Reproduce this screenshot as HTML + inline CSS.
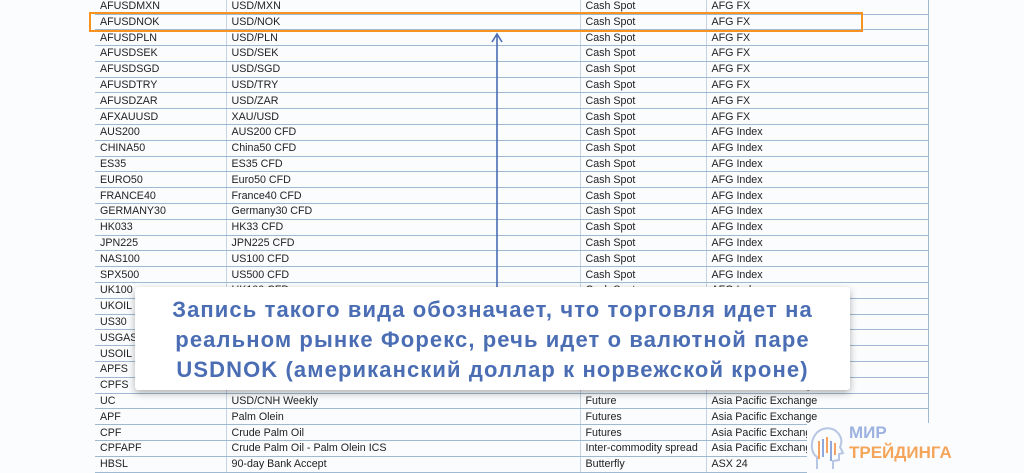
<!DOCTYPE html>
<html><head><meta charset="utf-8"><style>
html,body{margin:0;padding:0;width:1024px;height:473px;overflow:hidden;background:#fafcfe;position:relative;font-family:"Liberation Sans",Arial,sans-serif}
table{position:absolute;left:95px;top:-1.3px;border-collapse:collapse;table-layout:fixed;width:833px}
td{height:14.8px;padding:0 0 0 5px;border-bottom:1px solid #9fb9d3;border-left:1px solid #c5d3e2;font-size:10.7px;color:#222;line-height:14px;white-space:nowrap;overflow:hidden;vertical-align:middle}
td:first-child{border-left:none}
td:last-child{border-right:1px solid #9fb9d3}
.box{position:absolute;left:135px;top:287px;width:715px;height:103px;background:#fff;border-radius:3px;box-shadow:0 3px 8px rgba(0,0,0,0.3)}
.box p{margin:0;position:absolute;left:0;right:0;top:8px;text-align:center;color:#4a6db4;font-weight:bold;font-size:22px;letter-spacing:1.1px;line-height:30px}
.orange{position:absolute;left:89px;top:12px;width:770px;height:16px;border:2px solid #f7931e}
.logo{position:absolute;left:807px;top:423px;width:217px;height:50px;background:#fafcfe}
</style></head><body>
<table>
<colgroup><col style="width:131px"><col style="width:354px"><col style="width:126px"><col style="width:222px"></colgroup>
<tr><td>AFUSDMXN</td><td>USD/MXN</td><td>Cash Spot</td><td>AFG FX</td></tr>
<tr><td>AFUSDNOK</td><td>USD/NOK</td><td>Cash Spot</td><td>AFG FX</td></tr>
<tr><td>AFUSDPLN</td><td>USD/PLN</td><td>Cash Spot</td><td>AFG FX</td></tr>
<tr><td>AFUSDSEK</td><td>USD/SEK</td><td>Cash Spot</td><td>AFG FX</td></tr>
<tr><td>AFUSDSGD</td><td>USD/SGD</td><td>Cash Spot</td><td>AFG FX</td></tr>
<tr><td>AFUSDTRY</td><td>USD/TRY</td><td>Cash Spot</td><td>AFG FX</td></tr>
<tr><td>AFUSDZAR</td><td>USD/ZAR</td><td>Cash Spot</td><td>AFG FX</td></tr>
<tr><td>AFXAUUSD</td><td>XAU/USD</td><td>Cash Spot</td><td>AFG FX</td></tr>
<tr><td>AUS200</td><td>AUS200 CFD</td><td>Cash Spot</td><td>AFG Index</td></tr>
<tr><td>CHINA50</td><td>China50 CFD</td><td>Cash Spot</td><td>AFG Index</td></tr>
<tr><td>ES35</td><td>ES35 CFD</td><td>Cash Spot</td><td>AFG Index</td></tr>
<tr><td>EURO50</td><td>Euro50 CFD</td><td>Cash Spot</td><td>AFG Index</td></tr>
<tr><td>FRANCE40</td><td>France40 CFD</td><td>Cash Spot</td><td>AFG Index</td></tr>
<tr><td>GERMANY30</td><td>Germany30 CFD</td><td>Cash Spot</td><td>AFG Index</td></tr>
<tr><td>HK033</td><td>HK33 CFD</td><td>Cash Spot</td><td>AFG Index</td></tr>
<tr><td>JPN225</td><td>JPN225 CFD</td><td>Cash Spot</td><td>AFG Index</td></tr>
<tr><td>NAS100</td><td>US100 CFD</td><td>Cash Spot</td><td>AFG Index</td></tr>
<tr><td>SPX500</td><td>US500 CFD</td><td>Cash Spot</td><td>AFG Index</td></tr>
<tr><td>UK100</td><td>UK100 CFD</td><td>Cash Spot</td><td>AFG Index</td></tr>
<tr><td>UKOIL</td><td>UK Oil CFD</td><td>Cash Spot</td><td>AFG Index</td></tr>
<tr><td>US30</td><td>US30 CFD</td><td>Cash Spot</td><td>AFG Index</td></tr>
<tr><td>USGAS</td><td>US Gas CFD</td><td>Cash Spot</td><td>AFG Index</td></tr>
<tr><td>USOIL</td><td>US Oil CFD</td><td>Cash Spot</td><td>AFG Index</td></tr>
<tr><td>APFS</td><td>Palm Olein</td><td>Future</td><td>Asia Pacific Exchange</td></tr>
<tr><td>CPFS</td><td>Crude Palm Oil</td><td>Future</td><td>Asia Pacific Exchange</td></tr>
<tr><td>UC</td><td>USD/CNH Weekly</td><td>Future</td><td>Asia Pacific Exchange</td></tr>
<tr><td>APF</td><td>Palm Olein</td><td>Futures</td><td>Asia Pacific Exchange</td></tr>
<tr><td>CPF</td><td>Crude Palm Oil</td><td>Futures</td><td>Asia Pacific Exchange</td></tr>
<tr><td>CPFAPF</td><td>Crude Palm Oil - Palm Olein ICS</td><td>Inter-commodity spread</td><td>Asia Pacific Exchange</td></tr>
<tr><td>HBSL</td><td>90-day Bank Accept</td><td>Butterfly</td><td>ASX 24</td></tr>
</table>
<div class="orange"></div>
<svg style="position:absolute;left:489px;top:32px" width="16" height="260"><path d="M8 2V260M3 10L8 2L13 10" stroke="#4a6db4" stroke-width="1.6" fill="none"/></svg>
<div class="box"><p>Запись такого вида обозначает, что торговля идет на<br>реальном рынке Форекс, речь идет о валютной паре<br>USDNOK (американский доллар к норвежской кроне)</p></div>
<div class="logo">
<svg style="position:absolute;left:0;top:0" width="40" height="50" viewBox="0 0 40 50"><path d="M10 46V34C4 30 3 20 8 12C13 4 25 3 31 10C35 15 35 20 33 24L36 30L32 31V37L26 38V46" stroke="#b7c6e3" stroke-width="2" fill="none"/><g stroke="#f4a460" stroke-width="2"><path d="M12 18V36M20 14V30M28 20V32"/></g><g stroke="#8fa8dc" stroke-width="2"><path d="M16 16V34M24 18V38"/></g></svg>
<div style="position:absolute;left:42px;top:0;font-weight:bold;font-size:17px;color:#9db2e0;line-height:20px">МИР</div>
<div style="position:absolute;left:42px;top:20px;font-weight:bold;font-size:17px;color:#f5a55a;line-height:20px">ТРЕЙДИНГА</div>
</div>
</body></html>
